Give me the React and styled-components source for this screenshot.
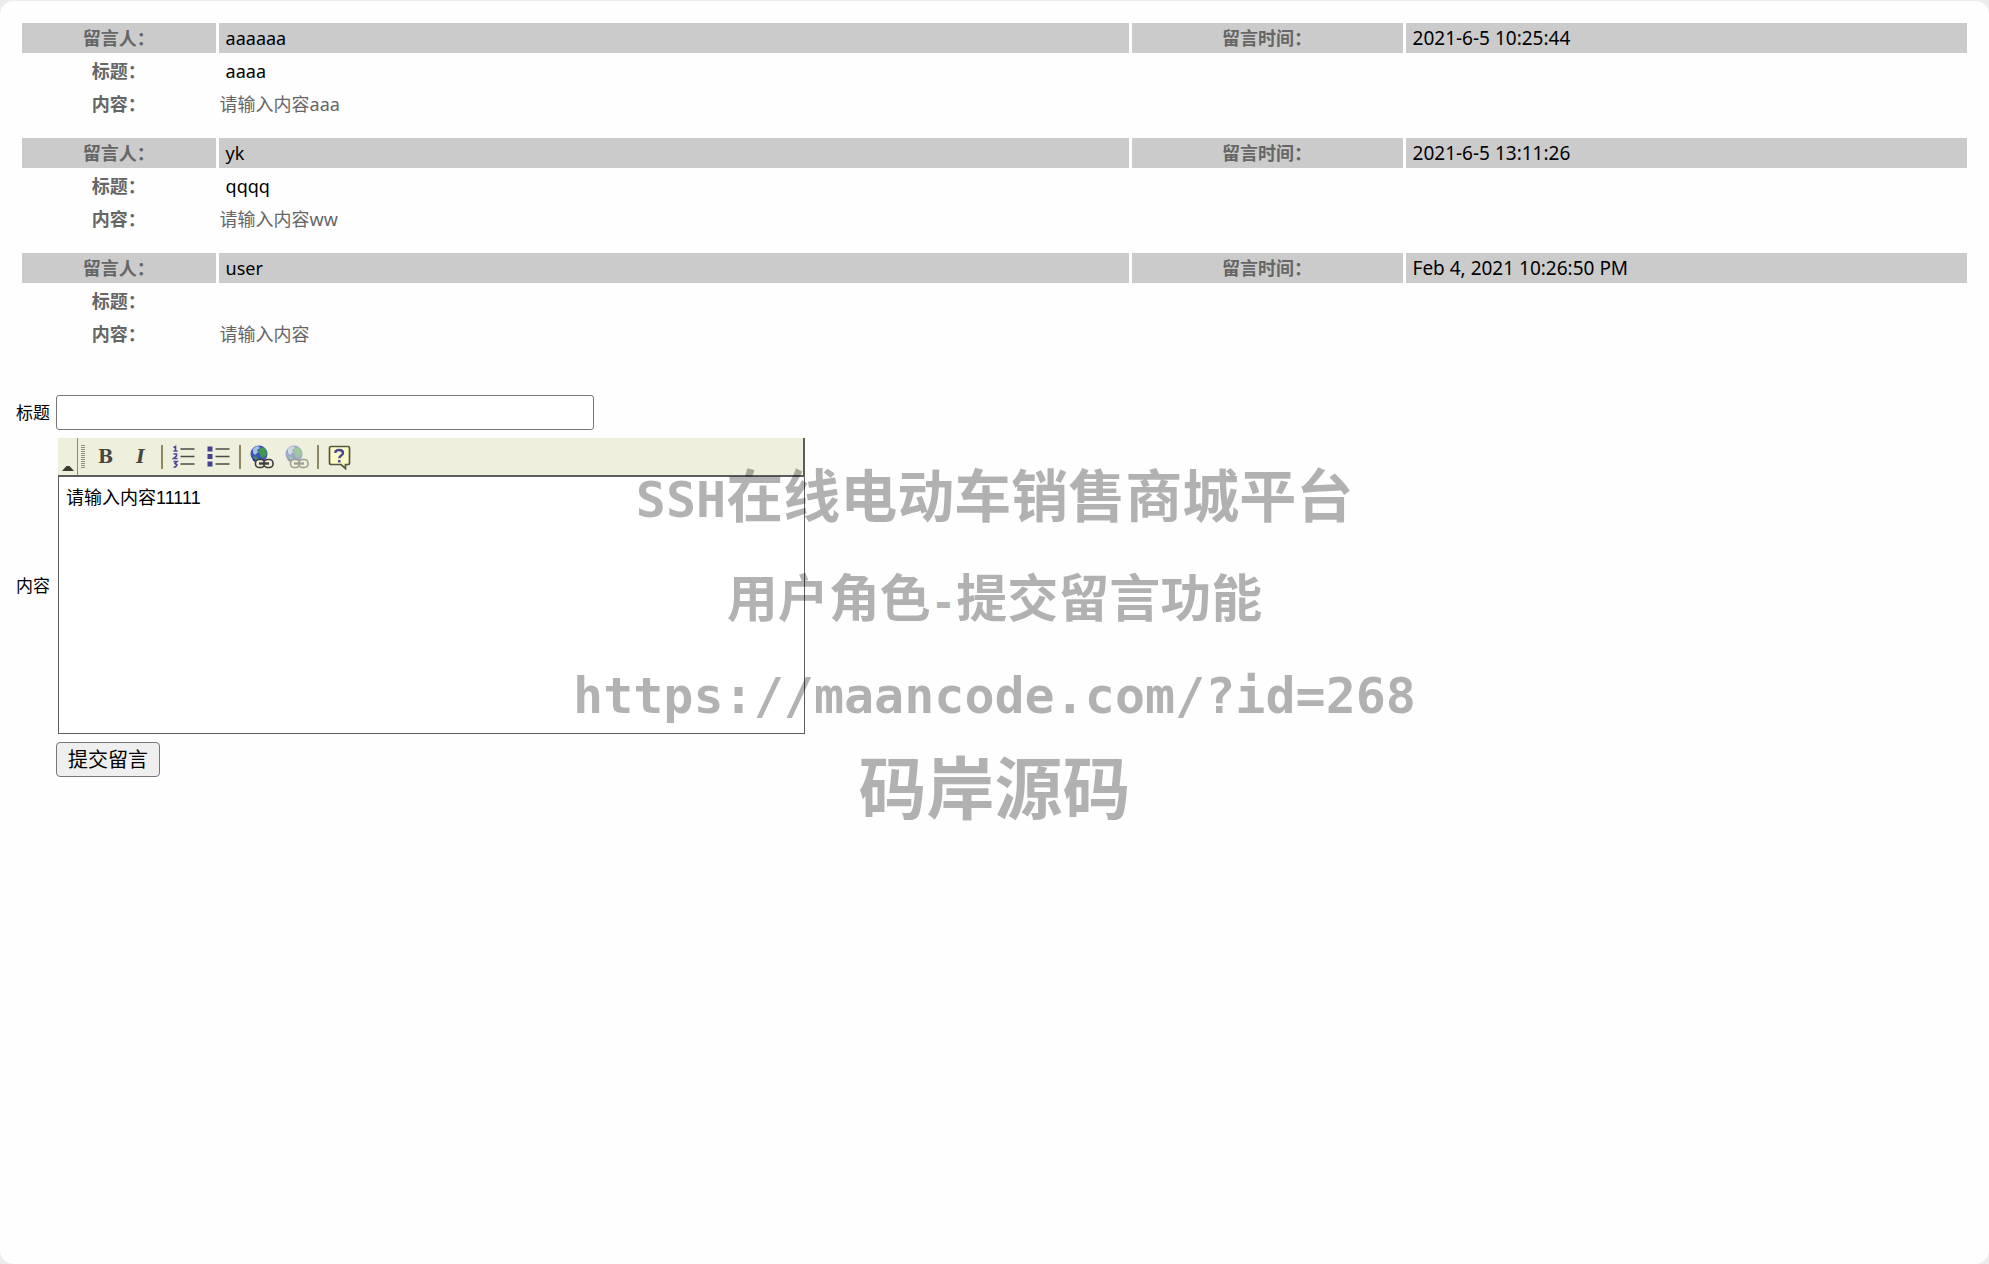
import React from "react";
import styled, { createGlobalStyle } from "styled-components";

const colorHead = "#cbcbcb";
const colorLabel = "#666";
const colorBar = "#efefde";
const colorLine = "#5c5c5c";

const GlobalStyle = createGlobalStyle`
    * {
        box-sizing: border-box;
    }
    body {
        margin: 0;
        background: #ececec;
        color: #000;
        font-family: "Noto Sans", "Noto Sans CJK SC", sans-serif;
        font-size: 18px;
    }
`;

const Page = styled.main`
    position: relative;
    min-height: 100vh;
    border-top: 1px solid #ececec;
    border-radius: 14px;
    background: #fefefe;
    padding: 19px 0 40px;
`;

const MessageList = styled.section`
    display: flex;
    flex-direction: column;
    gap: 13px;
    padding: 0 19px;
`;

const Table = styled.table`
    width: 100%;
    table-layout: fixed;
    border-spacing: 3px;
`;

const Col = styled.col`
    width: ${props => props.$width};
`;

const Tr = styled.tr`
    height: 30px;
`;

const Th = styled.th`
    padding: 0;
    color: ${colorLabel};
    line-height: 28px;
    text-align: center;
`;

const Td = styled.td`
    padding: 0 7px;
    line-height: 28px;
`;

const ContentTd = styled(Td)`
    padding: 0 1px;
    color: ${colorLabel};
`;

const HeadTh = styled(Th)`
    background: ${colorHead};
`;

const HeadTd = styled(Td)`
    background: ${colorHead};
`;

const HeadDate = styled(HeadTd)`
    font-size: 19px;
`;

const Form = styled.form`
    display: grid;
    grid-template-columns: 34px 1fr;
    gap: 8px 6px;
    align-items: center;
    justify-items: start;
    margin-top: 43px;
    padding: 0 16px;
`;

const Label = styled.label`
    font-size: 17px;
    line-height: 24px;
    white-space: nowrap;
`;

const TitleInput = styled.input`
    width: 538px;
    max-width: 100%;
    height: 35px;
    border: 1px solid #767676;
    border-radius: 3px;
    background: #fff;
    padding: 0 6px;
    font: inherit;
`;

const Editor = styled.div`
    width: 747px;
    max-width: 100%;
    margin-left: 2px;
`;

const Toolbar = styled.div`
    display: flex;
    align-items: center;
    height: 39px;
    border-right: 2px solid ${colorLine};
    border-bottom: 2px solid ${colorLine};
    background: ${colorBar};
`;

const CollapseButton = styled.button`
    display: flex;
    align-items: flex-end;
    justify-content: center;
    width: 20px;
    height: 100%;
    border: none;
    border-right: 1px solid #8c8c7c;
    background: none;
    padding: 0 0 4px;
`;

const Grip = styled.span`
    width: 4px;
    height: 23px;
    margin: 0 3px;
    background: repeating-linear-gradient(#8f8f82 0 1px, ${colorBar} 1px 2px);
`;

const ToolButton = styled.button`
    display: flex;
    align-items: center;
    justify-content: center;
    width: 35px;
    height: 35px;
    border: none;
    background: none;
    padding: 0;
    color: #47473f;
    font-family: "DejaVu Serif", serif;
    font-size: 18px;
    font-weight: bold;
    font-style: ${props => (props.$italic ? "italic" : "normal")};
    opacity: ${props => (props.disabled ? 0.45 : 1)};
`;

const Separator = styled.span`
    width: 2px;
    height: 24px;
    margin: 0 3px;
    background: #8e8763;
`;

const Textarea = styled.textarea`
    display: block;
    width: 100%;
    height: 257px;
    border: 1px solid ${colorLine};
    border-top: none;
    background: #fff;
    padding: 7px;
    resize: none;
    color: #000;
    font-family: "Liberation Sans", "Noto Sans CJK SC", sans-serif;
    font-size: 18px;
    line-height: 28px;
`;

const SubmitButton = styled.button`
    grid-column: 2;
    height: 35px;
    border: 1px solid #767676;
    border-radius: 4px;
    background: #efefef;
    padding: 0 11px;
    color: #000;
    font-family: inherit;
    font-size: 20px;
    line-height: 30px;
`;

// stamp over the page, does not take clicks
const Watermark = styled.div`
    position: absolute;
    top: 436px;
    left: 0;
    right: 0;
    color: rgba(0, 0, 0, 0.3);
    font-family: "Noto Sans CJK SC", sans-serif;
    font-weight: bold;
    text-align: center;
    white-space: nowrap;
    pointer-events: none;
`;

const WatermarkLine = styled.div`
    font-size: ${props => props.$size}px;
    line-height: ${props => props.$height}px;
`;

const Mono = styled.span`
    font-family: "DejaVu Sans Mono", monospace;
    font-size: ${props => props.$size}px;
    line-height: 1;
`;

const OrderedIcon = () => (
  <svg width="24" height="24" viewBox="0 0 24 24">
    <path d="M8.500 4h14M8.500 11.500h14M8.500 19h14" stroke="#4c4c46" strokeWidth="1.600" />
    <path
      d="M1.500 2.500l2-1v4.500M1.500 6h4M1.500 9h3v2l-3 2.500h4M1.500 16.500h3.500l-2 2 2 1.500-1.500 2H1.500"
      fill="none"
      stroke="#4a4896"
      strokeWidth="1.600"
    />
  </svg>
);

const BulletIcon = () => (
  <svg width="24" height="24" viewBox="0 0 24 24">
    <path d="M8.500 4h14M8.500 11.500h14M8.500 19h14" stroke="#4c4c46" strokeWidth="1.600" />
    <path d="M.5 1.500h5v5h-5zM.5 9h5v5h-5zM.5 16.500h5v5h-5z" fill="#43418c" />
  </svg>
);

const LinkIcon = () => (
  <svg width="24" height="24" viewBox="0 0 24 24">
    <circle cx="9" cy="9" r="8.500" fill="#3d55b4" />
    <path d="M3 4a8 8 0 0 1 5-3l2 2-3 2 1 2-3 3-2-2z" fill="#a9bfe6" />
    <path d="M9 4l4-2 3 3 1 4-3 4-3-1-1-3-2-2zM3 11l4 1 2 4-2 1z" fill="#3f9650" />
    <path d="M3 14a9 9 0 0 0 5 3.500" fill="none" stroke="#24306c" strokeWidth="1.500" />
    <g fill={colorBar} stroke="#3e3e3a" strokeWidth="1.600">
      <rect x="5.500" y="14.500" width="9" height="8" rx="3.500" />
      <rect x="14" y="14.500" width="9" height="8" rx="3.500" />
      <path d="M9 18.500h10" strokeWidth="2.400" />
    </g>
  </svg>
);

const HelpIcon = () => (
  <svg width="24" height="26" viewBox="0 0 24 26">
    <path
      d="M3 2.500h17q1.500 0 1.500 2v14q0 2-1.500 2h-2.500V24.500l-4.500-4H3q-1.500 0-1.500-2v-14q0-2 1.500-2z"
      fill="#fbfbc8"
      stroke="#57573c"
      strokeWidth="1.700"
    />
    <path
      d="M7.500 9V7.500Q8.500 6 11 6q4 0 4 3 0 1.500-2 2.700-1.700 1-1.700 2.600M11.300 16v2.500"
      fill="none"
      stroke="#4a4896"
      strokeWidth="2.400"
    />
  </svg>
);

const messages = [
  { id: 1, user: "aaaaaa", title: "aaaa", content: "请输入内容aaa", date: "2021-6-5 10:25:44" },
  { id: 2, user: "yk", title: "qqqq", content: "请输入内容ww", date: "2021-6-5 13:11:26" },
  { id: 3, user: "user", title: "", content: "请输入内容", date: "Feb 4, 2021 10:26:50 PM" }
];

const Message = ({ message }) => (
  <Table>
    <colgroup>
      <Col $width="10%" />
      <Col $width="47%" />
      <Col $width="14%" />
      <Col $width="29%" />
    </colgroup>
    <tbody>
      <Tr>
        <HeadTh scope="row">留言人：</HeadTh>
        <HeadTd>{message.user}</HeadTd>
        <HeadTh scope="row">留言时间：</HeadTh>
        <HeadDate>{message.date}</HeadDate>
      </Tr>
      <Tr>
        <Th scope="row">标题：</Th>
        <Td colSpan="3">{message.title}</Td>
      </Tr>
      <Tr>
        <Th scope="row">内容：</Th>
        <ContentTd colSpan="3">{message.content}</ContentTd>
      </Tr>
    </tbody>
  </Table>
);

class App extends React.Component {
  constructor() {
    super();
    this.state = { title: "", content: "请输入内容11111" };
  }

  handleChange = e => {
    this.setState({ [e.target.name]: e.target.value });
  };

  handleSubmit = e => {
    e.preventDefault();
  };

  render() {
    const { title, content } = this.state;

    return (
      <Page>
        <GlobalStyle />

        <MessageList>
          {messages.map(item => <Message key={item.id} message={item} />)}
        </MessageList>

        <Form onSubmit={this.handleSubmit}>
          <Label htmlFor="title">标题</Label>
          <TitleInput id="title" name="title" value={title} onChange={this.handleChange} />

          <Label htmlFor="content">内容</Label>
          <Editor>
            <Toolbar>
              <CollapseButton type="button" aria-label="Collapse toolbar">
                <svg width="12" height="6" viewBox="0 0 12 6">
                  <path d="M0 6L4.500 1h3L12 6z" fill="#3c3c34" />
                </svg>
              </CollapseButton>
              <Grip />
              <ToolButton type="button" aria-label="Bold">B</ToolButton>
              <ToolButton type="button" aria-label="Italic" $italic>I</ToolButton>
              <Separator />
              <ToolButton type="button" aria-label="Numbered list"><OrderedIcon /></ToolButton>
              <ToolButton type="button" aria-label="Bulleted list"><BulletIcon /></ToolButton>
              <Separator />
              <ToolButton type="button" aria-label="Link"><LinkIcon /></ToolButton>
              <ToolButton type="button" aria-label="Unlink" disabled><LinkIcon /></ToolButton>
              <Separator />
              <ToolButton type="button" aria-label="About"><HelpIcon /></ToolButton>
            </Toolbar>
            <Textarea id="content" name="content" value={content} onChange={this.handleChange} />
          </Editor>

          <SubmitButton type="submit">提交留言</SubmitButton>
        </Form>

        <Watermark>
          <WatermarkLine $size={57} $height={110}><Mono $size={50}>SSH</Mono>在线电动车销售商城平台</WatermarkLine>
          <WatermarkLine $size={51} $height={96}>用户角色<Mono $size={42}>-</Mono>提交留言功能</WatermarkLine>
          <WatermarkLine $size={50} $height={96}><Mono $size={50}>https://maancode.com/?id=268</Mono></WatermarkLine>
          <WatermarkLine $size={68} $height={92}>码岸源码</WatermarkLine>
        </Watermark>
      </Page>
    );
  }
}

export default App;
